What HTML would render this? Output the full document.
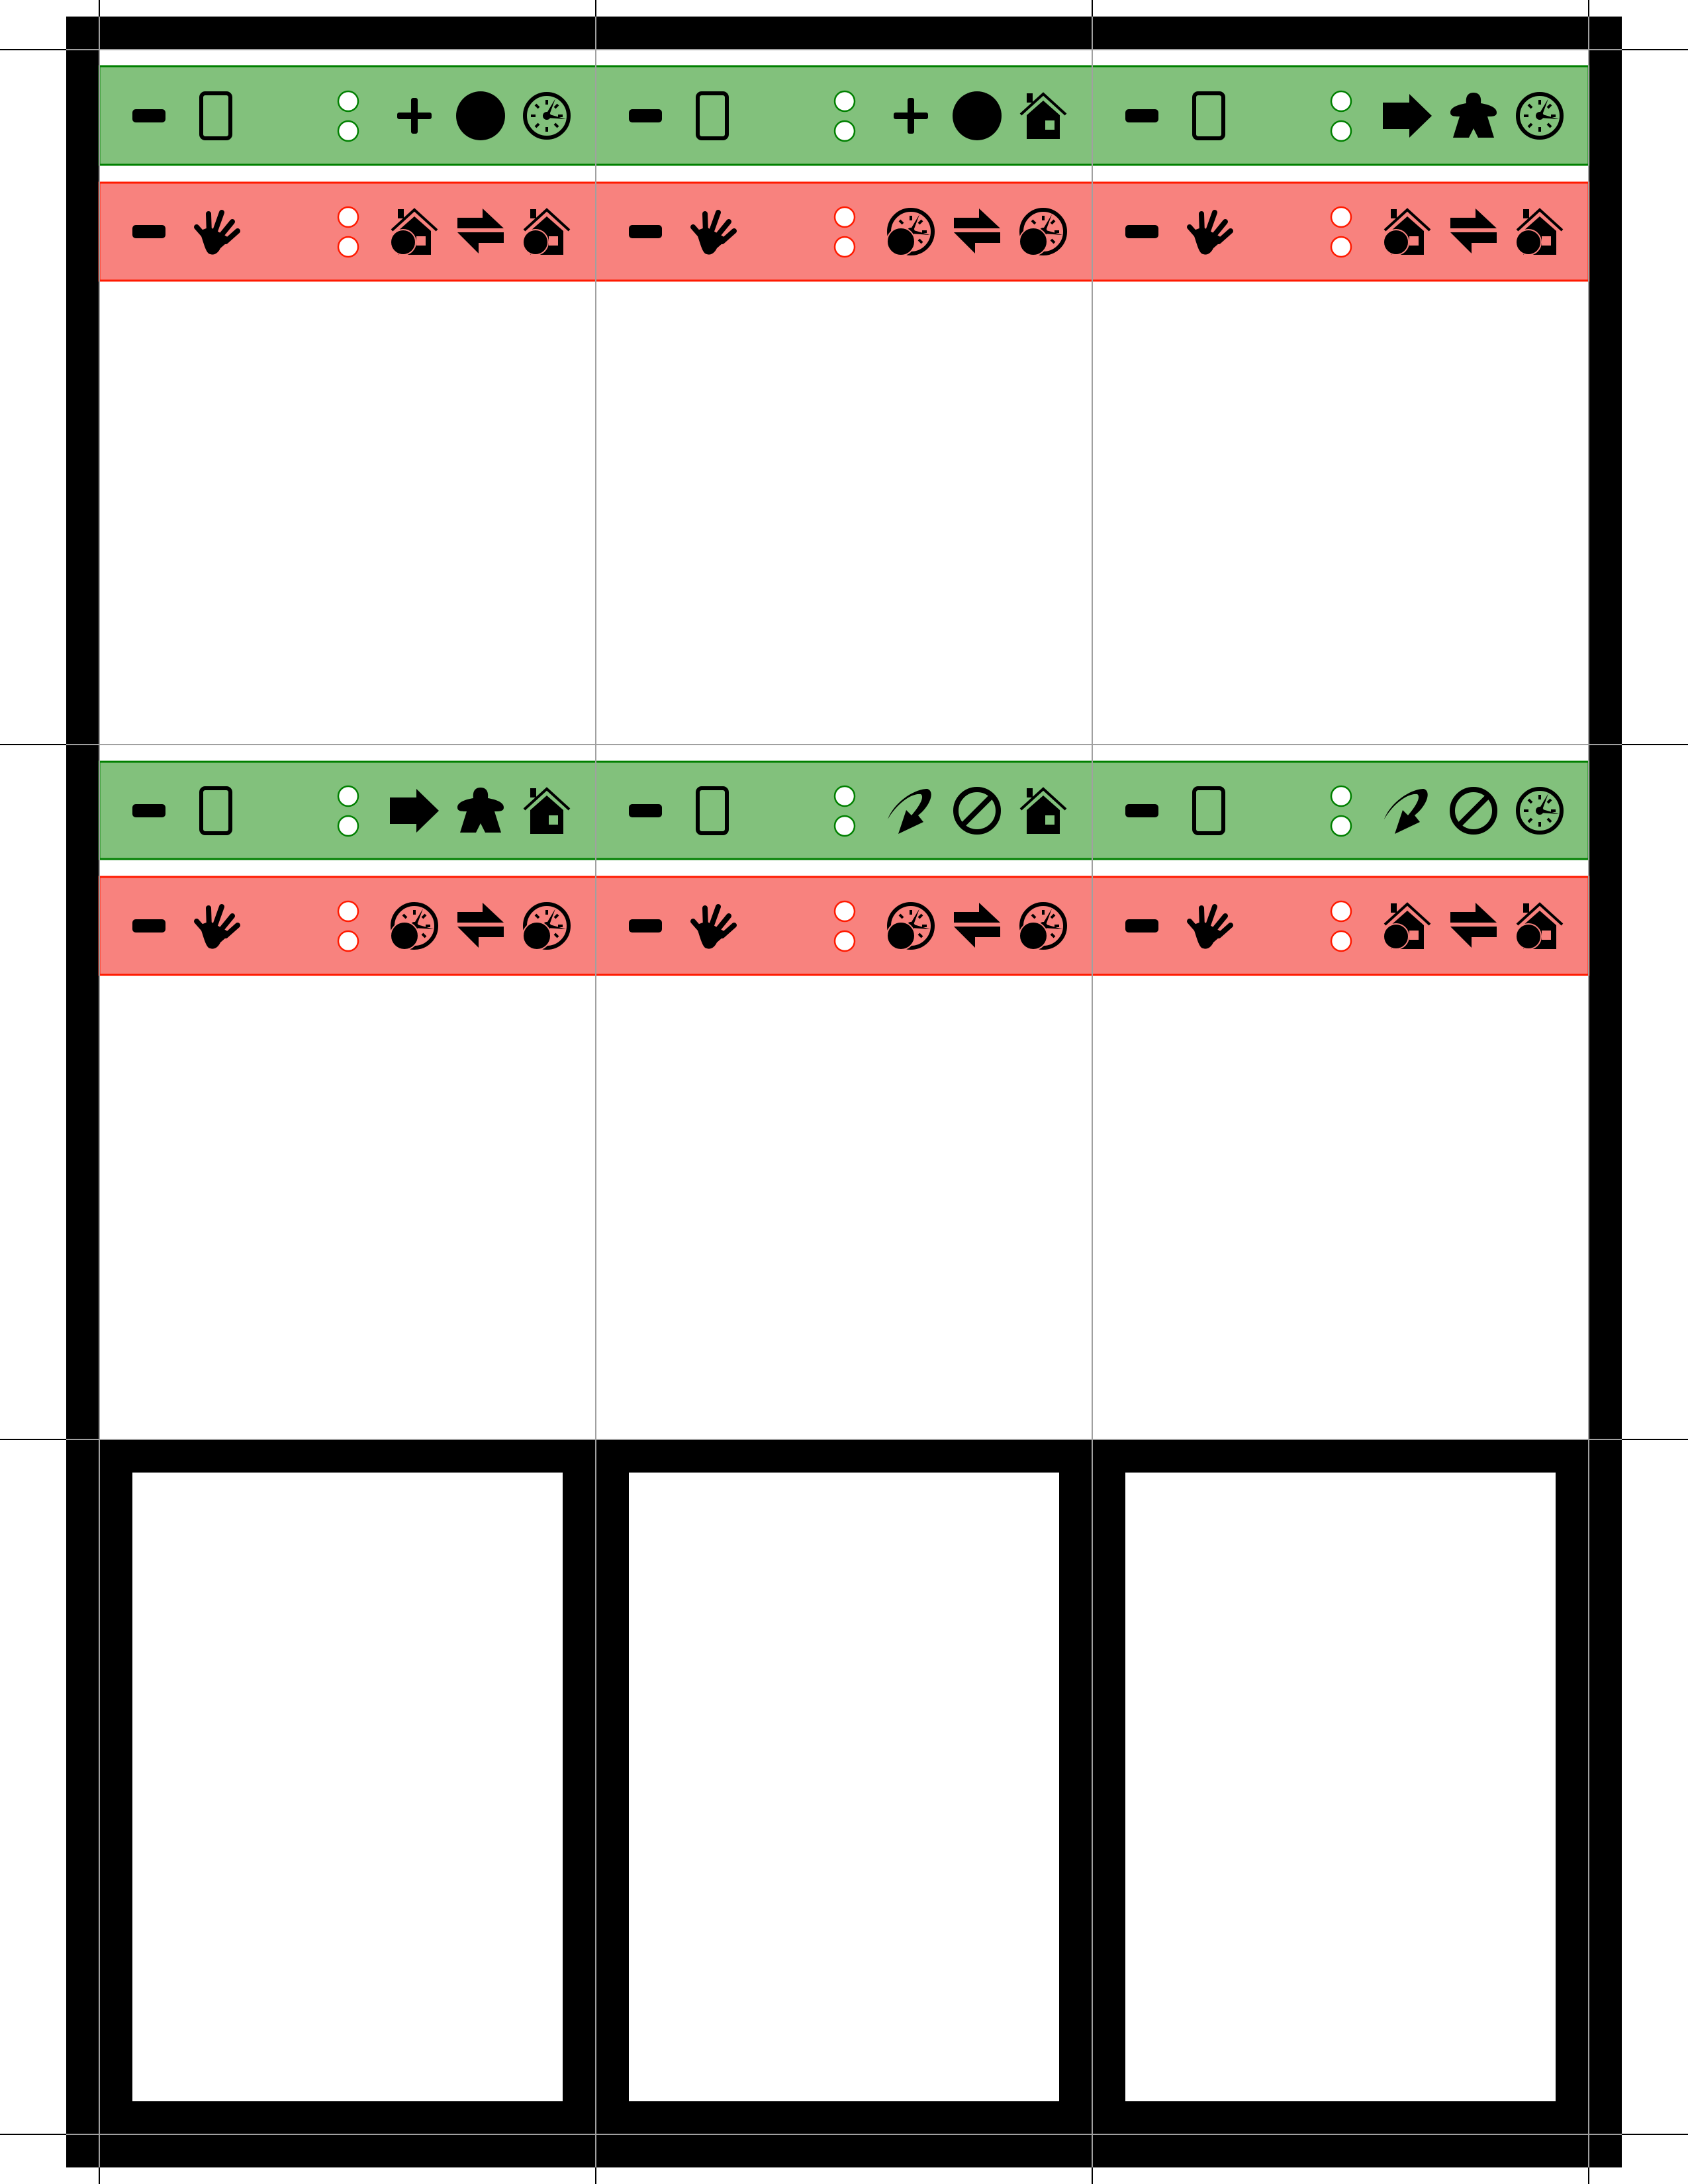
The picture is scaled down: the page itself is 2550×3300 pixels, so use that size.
<!DOCTYPE html>
<html><head><meta charset="utf-8"><style>html,body{margin:0;padding:0;background:#fff}svg{display:block}</style></head>
<body>
<svg width="2550" height="3300" viewBox="0 0 2550 3300" xmlns="http://www.w3.org/2000/svg" xmlns:xlink="http://www.w3.org/1999/xlink">
<defs>
<symbol id="plus" viewBox="0 0 74 74"><rect x="11" y="32" width="52" height="10" rx="3"/><rect x="32" y="10" width="10" height="54" rx="3"/></symbol>
<symbol id="dot" viewBox="0 0 74 74"><circle cx="37" cy="37" r="37"/></symbol>
<symbol id="clock" viewBox="0 0 74 74"><g stroke="#000" stroke-width="4" fill="none"><circle cx="37" cy="37" r="33" stroke-width="6"/><path d="M37 13v7M37 54v7M13 37h7M54 37h7M20 20l5 5M54 20l-5 5M20 54l5-5M54 54l-5-5"/></g><polygon points="35,36 50,11 40,38"/><polygon points="38,34 66,42 37,40"/><circle cx="37" cy="37" r="6"/></symbol>
<symbol id="clockc" viewBox="0 0 74 74"><use xlink:href="#clock"/><circle cx="22" cy="52" r="21" stroke="currentColor" stroke-width="2"/></symbol>
<symbol id="house" viewBox="0 0 74 74"><rect x="12" y="3" width="9" height="14"/><polyline points="3,35 37,4 71,35" fill="none" stroke="#000" stroke-width="4"/><path fill-rule="evenodd" d="M12,36 L37,14 L62,36 V72 H12 Z M40,44 H54 V58 H40 Z"/></symbol>
<symbol id="housec" viewBox="0 0 74 74"><use xlink:href="#house"/><circle cx="20" cy="53" r="19" stroke="currentColor" stroke-width="2"/></symbol>
<symbol id="swap" viewBox="0 0 74 74"><rect x="2" y="16" width="40" height="16"/><polygon points="40,2 72,32 40,32"/><rect x="32" y="38" width="40" height="16"/><polygon points="34,38 2,38 34,70"/></symbol>
<symbol id="arrow" viewBox="0 0 74 74"><rect x="0" y="17" width="42" height="40"/><polygon points="40,4 74,37 40,70"/></symbol>
<symbol id="meeple" viewBox="0 0 74 74"><path d="M37,2 C27,2 25,10 26,18 C14,20 2,24 2,32 C2,38 8,38 16,38 L6,70 L30,70 L37,56 L44,70 L68,70 L58,38 C66,38 72,38 72,32 C72,24 60,20 48,18 C49,10 47,2 37,2 Z"/></symbol>
<symbol id="nosign" viewBox="0 0 74 74"><circle cx="37" cy="37" r="32" fill="none" stroke="#000" stroke-width="8"/><line x1="15" y1="59" x2="59" y2="15" stroke="#000" stroke-width="8"/></symbol>
<symbol id="curve" viewBox="0 0 74 74"><path d="M2,50 C12,24 42,4 62,4 C74,8 66,30 48,44 L56,54 L18,72 L30,36 L38,44 C50,30 58,16 52,12 C38,10 16,26 2,50 Z"/></symbol>
<symbol id="hand" viewBox="0 0 74 74"><g stroke="#000" stroke-width="8" stroke-linecap="round"><path d="M8,30 L22,46"/><path d="M26,10 L27,40"/><path d="M46,8 L36,36"/><path d="M62,22 L44,44"/><path d="M70,36 L52,52"/></g><path d="M12,36 C18,50 20,64 26,70 C34,74 40,70 44,62 L60,48 L28,30 Z"/></symbol>
<g id="dummy"></g>
</defs>

<rect x="100" y="25" width="2350" height="3250" fill="#000"/>
<rect x="150" y="75" width="2250" height="2100" fill="#fff"/>
<rect x="200" y="2225" width="650" height="950" fill="#fff"/>
<rect x="950" y="2225" width="650" height="950" fill="#fff"/>
<rect x="1700" y="2225" width="650" height="950" fill="#fff"/>

<!-- bands -->
<g stroke-width="3">
<rect x="150" y="100" width="2250" height="149" fill="#82c17c" stroke="#008000"/>
<rect x="150" y="276" width="2250" height="148" fill="#f8827e" stroke="#ff1a00"/>
<rect x="150" y="1151" width="2250" height="147" fill="#82c17c" stroke="#008000"/>
<rect x="150" y="1325" width="2250" height="148" fill="#f8827e" stroke="#ff1a00"/>
</g>

<!-- common per card items -->
<g id="c">
</g>
<g fill="#000">
<!-- row1 green y=175, red y=350 ; row2 green 1225, red 1399 -->
<!-- minus + card -->
<rect x="200" y="165" width="50" height="20" rx="5"/><rect x="950" y="165" width="50" height="20" rx="5"/><rect x="1700" y="165" width="50" height="20" rx="5"/>
<rect x="200" y="340" width="50" height="20" rx="5"/><rect x="950" y="340" width="50" height="20" rx="5"/><rect x="1700" y="340" width="50" height="20" rx="5"/>
<rect x="200" y="1215" width="50" height="20" rx="5"/><rect x="950" y="1215" width="50" height="20" rx="5"/><rect x="1700" y="1215" width="50" height="20" rx="5"/>
<rect x="200" y="1389" width="50" height="20" rx="5"/><rect x="950" y="1389" width="50" height="20" rx="5"/><rect x="1700" y="1389" width="50" height="20" rx="5"/>
</g>
<g fill="none" stroke="#000" stroke-width="6">
<rect x="304" y="141" width="44" height="68" rx="6"/><rect x="1054" y="141" width="44" height="68" rx="6"/><rect x="1804" y="141" width="44" height="68" rx="6"/>
<rect x="304" y="1191" width="44" height="68" rx="6"/><rect x="1054" y="1191" width="44" height="68" rx="6"/><rect x="1804" y="1191" width="44" height="68" rx="6"/>
</g>
<g fill="#fff" stroke-width="2.5">
<g stroke="#008000">
<circle cx="526" cy="153" r="15"/><circle cx="526" cy="198" r="15"/><circle cx="1276" cy="153" r="15"/><circle cx="1276" cy="198" r="15"/><circle cx="2026" cy="153" r="15"/><circle cx="2026" cy="198" r="15"/>
<circle cx="526" cy="1203" r="15"/><circle cx="526" cy="1248" r="15"/><circle cx="1276" cy="1203" r="15"/><circle cx="1276" cy="1248" r="15"/><circle cx="2026" cy="1203" r="15"/><circle cx="2026" cy="1248" r="15"/>
</g>
<g stroke="#ff1a00">
<circle cx="526" cy="328" r="15"/><circle cx="526" cy="373" r="15"/><circle cx="1276" cy="328" r="15"/><circle cx="1276" cy="373" r="15"/><circle cx="2026" cy="328" r="15"/><circle cx="2026" cy="373" r="15"/>
<circle cx="526" cy="1377" r="15"/><circle cx="526" cy="1422" r="15"/><circle cx="1276" cy="1377" r="15"/><circle cx="1276" cy="1422" r="15"/><circle cx="2026" cy="1377" r="15"/><circle cx="2026" cy="1422" r="15"/>
</g>
</g>

<g fill="#000" style="color:#f8827e">
<!-- hands -->
<use xlink:href="#hand" x="289" y="313" width="74" height="74"/>
<use xlink:href="#hand" x="1039" y="313" width="74" height="74"/>
<use xlink:href="#hand" x="1789" y="313" width="74" height="74"/>
<use xlink:href="#hand" x="289" y="1362" width="74" height="74"/>
<use xlink:href="#hand" x="1039" y="1362" width="74" height="74"/>
<use xlink:href="#hand" x="1789" y="1362" width="74" height="74"/>
<!-- row1 col1 -->
<use xlink:href="#plus" x="589" y="138" width="74" height="74"/>
<use xlink:href="#dot" x="689" y="138" width="74" height="74"/>
<use xlink:href="#clock" x="789" y="138" width="74" height="74"/>
<use xlink:href="#housec" x="589" y="313" width="74" height="74"/>
<use xlink:href="#swap" x="689" y="313" width="74" height="74"/>
<use xlink:href="#housec" x="789" y="313" width="74" height="74"/>
<!-- row1 col2 -->
<use xlink:href="#plus" x="1339" y="138" width="74" height="74"/>
<use xlink:href="#dot" x="1439" y="138" width="74" height="74"/>
<use xlink:href="#house" x="1539" y="138" width="74" height="74"/>
<use xlink:href="#clockc" x="1339" y="313" width="74" height="74"/>
<use xlink:href="#swap" x="1439" y="313" width="74" height="74"/>
<use xlink:href="#clockc" x="1539" y="313" width="74" height="74"/>
<!-- row1 col3 -->
<use xlink:href="#arrow" x="2089" y="138" width="74" height="74"/>
<use xlink:href="#meeple" x="2189" y="138" width="74" height="74"/>
<use xlink:href="#clock" x="2289" y="138" width="74" height="74"/>
<use xlink:href="#housec" x="2089" y="313" width="74" height="74"/>
<use xlink:href="#swap" x="2189" y="313" width="74" height="74"/>
<use xlink:href="#housec" x="2289" y="313" width="74" height="74"/>
<!-- row2 col1 -->
<use xlink:href="#arrow" x="589" y="1188" width="74" height="74"/>
<use xlink:href="#meeple" x="689" y="1188" width="74" height="74"/>
<use xlink:href="#house" x="789" y="1188" width="74" height="74"/>
<use xlink:href="#clockc" x="589" y="1362" width="74" height="74"/>
<use xlink:href="#swap" x="689" y="1362" width="74" height="74"/>
<use xlink:href="#clockc" x="789" y="1362" width="74" height="74"/>
<!-- row2 col2 -->
<use xlink:href="#curve" x="1339" y="1188" width="74" height="74"/>
<use xlink:href="#nosign" x="1439" y="1188" width="74" height="74"/>
<use xlink:href="#house" x="1539" y="1188" width="74" height="74"/>
<use xlink:href="#clockc" x="1339" y="1362" width="74" height="74"/>
<use xlink:href="#swap" x="1439" y="1362" width="74" height="74"/>
<use xlink:href="#clockc" x="1539" y="1362" width="74" height="74"/>
<!-- row2 col3 -->
<use xlink:href="#curve" x="2089" y="1188" width="74" height="74"/>
<use xlink:href="#nosign" x="2189" y="1188" width="74" height="74"/>
<use xlink:href="#clock" x="2289" y="1188" width="74" height="74"/>
<use xlink:href="#housec" x="2089" y="1362" width="74" height="74"/>
<use xlink:href="#swap" x="2189" y="1362" width="74" height="74"/>
<use xlink:href="#housec" x="2289" y="1362" width="74" height="74"/>
</g>

<!-- guide lines -->
<g stroke="#a0a0a0" stroke-width="2">
<line x1="150" y1="0" x2="150" y2="3300"/><line x1="900" y1="0" x2="900" y2="3300"/><line x1="1650" y1="0" x2="1650" y2="3300"/><line x1="2400" y1="0" x2="2400" y2="3300"/>
<line x1="100" y1="75" x2="2450" y2="75"/><line x1="100" y1="1125" x2="2450" y2="1125"/><line x1="100" y1="2175" x2="2450" y2="2175"/><line x1="100" y1="3225" x2="2450" y2="3225"/>
</g>
<g stroke="#000" stroke-width="2">
<line x1="0" y1="75" x2="100" y2="75"/><line x1="2450" y1="75" x2="2550" y2="75"/>
<line x1="0" y1="1125" x2="100" y2="1125"/><line x1="2450" y1="1125" x2="2550" y2="1125"/>
<line x1="0" y1="2175" x2="100" y2="2175"/><line x1="2450" y1="2175" x2="2550" y2="2175"/>
<line x1="0" y1="3225" x2="100" y2="3225"/><line x1="2450" y1="3225" x2="2550" y2="3225"/>
<line x1="150" y1="0" x2="150" y2="25"/><line x1="900" y1="0" x2="900" y2="25"/><line x1="1650" y1="0" x2="1650" y2="25"/><line x1="2400" y1="0" x2="2400" y2="25"/>
<line x1="150" y1="3275" x2="150" y2="3300"/><line x1="900" y1="3275" x2="900" y2="3300"/><line x1="1650" y1="3275" x2="1650" y2="3300"/><line x1="2400" y1="3275" x2="2400" y2="3300"/>
</g>
</svg>
</body></html>
